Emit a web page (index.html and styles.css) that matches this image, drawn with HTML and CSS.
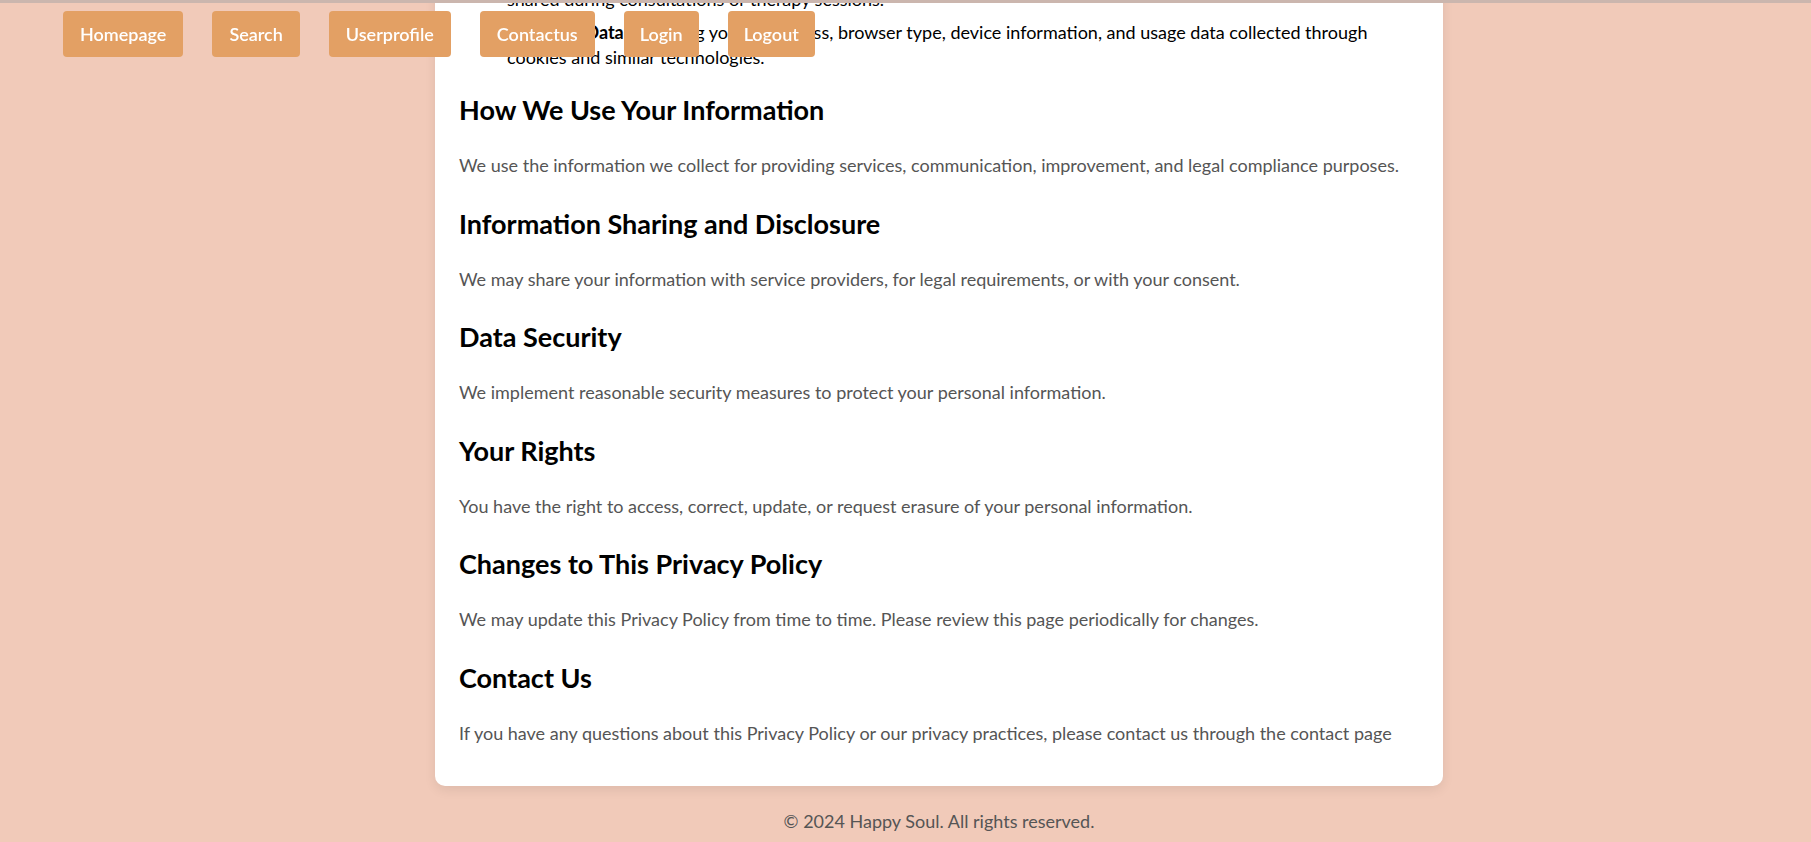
FILE: index.html
```html
<!DOCTYPE html>
<html lang="en">
<head>
<meta charset="utf-8">
<title>Privacy Policy - Happy Soul</title>
<link rel="stylesheet" href="styles.css">
</head>
<body>
<div class="topbar"></div>
<nav class="nav">
  <a class="nav-btn" href="#">Homepage</a>
  <a class="nav-btn" href="#">Search</a>
  <a class="nav-btn" href="#">Userprofile</a>
  <a class="nav-btn" href="#">Contactus</a>
  <a class="nav-btn" href="#">Login</a>
  <a class="nav-btn" href="#">Logout</a>
</nav>
<div class="page">
  <main class="card">
    <ul class="info-list">
      <li><strong>Health Information:</strong> Details about your emotional well-being and any other information you have<br>shared during consultations or therapy sessions.</li>
      <li><strong>Technical Data:</strong> Including your IP address, browser type, device information, and usage data collected through cookies and similar technologies.</li>
    </ul>

    <h2 class="section-title">How We Use Your Information</h2>
    <p class="section-text">We use the information we collect for providing services, communication, improvement, and legal compliance purposes.</p>

    <h2 class="section-title">Information Sharing and Disclosure</h2>
    <p class="section-text">We may share your information with service providers, for legal requirements, or with your consent.</p>

    <h2 class="section-title">Data Security</h2>
    <p class="section-text">We implement reasonable security measures to protect your personal information.</p>

    <h2 class="section-title">Your Rights</h2>
    <p class="section-text">You have the right to access, correct, update, or request erasure of your personal information.</p>

    <h2 class="section-title">Changes to This Privacy Policy</h2>
    <p class="section-text">We may update this Privacy Policy from time to time. Please review this page periodically for changes.</p>

    <h2 class="section-title">Contact Us</h2>
    <p class="section-text">If you have any questions about this Privacy Policy or our privacy practices, please contact us through the contact page</p>
  </main>
  <footer class="footer">© 2024 Happy Soul. All rights reserved.</footer>
</div>
</body>
</html>
```

FILE: styles.css
```css
html, body {
  margin: 0;
  padding: 0;
}

body {
  background: #f1cab9;
  font-family: Lato, "Open Sans", "Noto Sans", sans-serif;
  color: #000;
}

.topbar {
  position: fixed;
  top: 0;
  left: 0;
  right: 0;
  height: 3px;
  background: #cbb6ae;
  z-index: 20;
}

.nav {
  position: fixed;
  top: 11px;
  left: 63px;
  display: flex;
  gap: 29px;
  z-index: 10;
}

.nav-btn {
  display: block;
  height: 46px;
  line-height: 46px;
  padding: 0 17px;
  background: #e3a064;
  color: #fff;
  font-size: 18px;
  font-weight: 600;
  text-decoration: none;
  border-radius: 4px;
  box-sizing: border-box;
}

.nav-btn:nth-child(5),
.nav-btn:nth-child(6) {
  padding: 0 16px;
}

.page {
  padding-left: 67px;
}

.card {
  display: block;
  max-width: 1008px;
  margin: -62px auto 0;
  padding: 24px 40px 42px 24px;
  box-sizing: border-box;
  background: #fff;
  border-radius: 10px;
  box-shadow: 0 4px 12px rgba(0, 0, 0, 0.08);
}

.info-list {
  margin: 0 0 23px;
  padding-left: 48px;
  font-size: 18px;
  line-height: 25px;
  color: #000;
}

.info-list li {
  margin-bottom: 8px;
}

.info-list li:last-child {
  margin-bottom: 0;
}

.section-title {
  margin: 0 0 27px;
  font-size: 27px;
  line-height: 34px;
  font-weight: 700;
  color: #000;
}

.section-text {
  margin: 0 0 30.5px;
  font-size: 18px;
  line-height: 22px;
  color: #555;
}

.section-text:last-child {
  margin-bottom: 0;
}

.footer {
  padding: 24px 0 20px;
  text-align: center;
  font-size: 18px;
  line-height: 22px;
  color: #555;
}
```
